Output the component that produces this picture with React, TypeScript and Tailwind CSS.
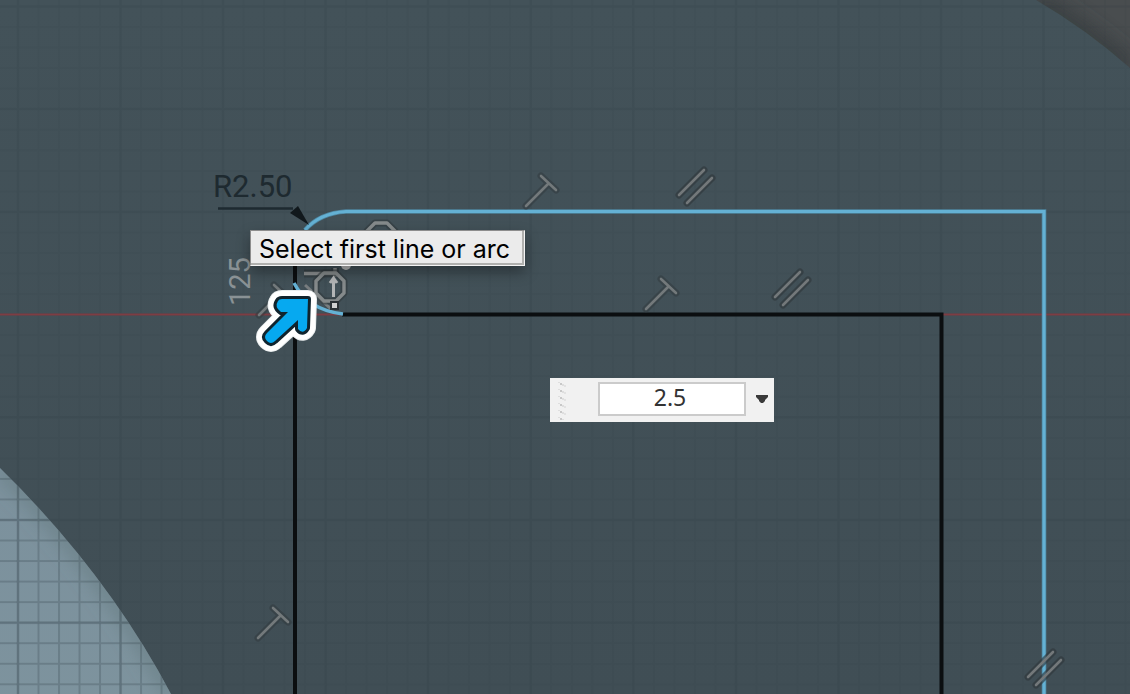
const GRID_X = 20.51;
const GRID_Y = 20.54;

function Perpendicular({ x, y }: { x: number; y: number }) {
  const d = "M0 0L22-22M15-30L30-16";
  return (
    <g transform={`translate(${x} ${y})`} fill="none" strokeLinecap="round">
      <path d={d} stroke="#30383c" strokeOpacity="0.5" strokeWidth="7" />
      <path d={d} stroke="#73797b" strokeWidth="2.6" />
    </g>
  );
}

function Parallel({ x, y }: { x: number; y: number }) {
  const d = "M0 0L25-25M8 8L33-17";
  return (
    <g transform={`translate(${x} ${y})`} fill="none" strokeLinecap="round">
      <path d={d} stroke="#30383c" strokeOpacity="0.65" strokeWidth="7" />
      <path d={d} stroke="#73787a" strokeWidth="2.6" />
    </g>
  );
}

function Octagon({ x, y }: { x: number; y: number }) {
  const d = "M-6-14H6L14-6V6L6 14H-6L-14 6V-6Z";
  return (
    <g transform={`translate(${x} ${y})`} fill="none" strokeLinejoin="round">
      <path d={d} stroke="#30383c" strokeOpacity="0.6" strokeWidth="7" />
      <path d={d} stroke="#858a8b" strokeWidth="3.4" />
    </g>
  );
}

function Cursor() {
  const d =
    "M278 301Q279 299 282 299L308 299L307 328Q303 335 298 329V320L275 341Q271 345 267 341Q263 337 267 333L288 312H281Q274 307 278 301Z";
  return (
    <g strokeLinejoin="round">
      <path d={d} fill="#fff" stroke="#e9edee" strokeWidth="18" />
      <path d={d} fill="#fff" stroke="#fff" strokeWidth="16" />
      <path d={d} fill="#10242e" stroke="#10242e" strokeWidth="6" />
      <path d={d} fill="#06a9f0" />
    </g>
  );
}

function Sketch() {
  return (
    <svg
      className="absolute inset-0 h-full w-full font-['Roboto',sans-serif]"
      role="img"
      aria-label="Sketch canvas"
    >
      <defs>
        <pattern id="minor" x="17" y="5.5" width={GRID_X} height={GRID_Y} patternUnits="userSpaceOnUse">
          <path d={`M0 1H${GRID_X}M1 0V${GRID_Y}`} stroke="#1d2b32" strokeWidth="2" fill="none" />
        </pattern>
        <pattern id="major" x="16.5" y="5" width={GRID_X * 5} height={GRID_Y * 5} patternUnits="userSpaceOnUse">
          <path d={`M0 1.5H${GRID_X * 5}M1.5 0V${GRID_Y * 5}`} stroke="#1d2b32" strokeWidth="3" fill="none" />
        </pattern>
        <linearGradient id="face" x1="0" y1="0" x2="0" y2="1">
          <stop offset="0" stopColor="#435259" />
          <stop offset="1" stopColor="#404e55" />
        </linearGradient>
        <linearGradient id="light" x1="0" y1="0" x2="0" y2="1">
          <stop offset="0" stopColor="#7c919d" />
          <stop offset="1" stopColor="#7f969e" />
        </linearGradient>
        <clipPath id="lower-left">
          <path d="M0 468Q107 573 171 694V2000H0Z" />
        </clipPath>
        <clipPath id="upper-right">
          <path d="M1036 0Q1086 29 1130 68L2000 900V0Z" />
        </clipPath>
        <filter id="edge" x="-20%" y="-20%" width="140%" height="140%">
          <feGaussianBlur stdDeviation="9" />
        </filter>
      </defs>

      <rect width="100%" height="100%" fill="url(#face)" />

      <g clipPath="url(#upper-right)">
        <path d="M1036 0Q1086 29 1130 68L2000 900V0Z" fill="#494d4f" />
        <path d="M1036 0Q1086 29 1130 68" fill="none" stroke="#393e40" strokeWidth="16" filter="url(#edge)" />
      </g>

      <rect width="100%" height="100%" fill="url(#minor)" opacity="0.06" />
      <rect width="100%" height="100%" fill="url(#major)" opacity="0.05" />

      <g clipPath="url(#lower-left)">
        <rect y="460" width="180" height="100%" fill="url(#light)" />
        <path d="M0 468Q107 573 171 694" fill="none" stroke="#667b81" strokeWidth="10" filter="url(#edge)" />
        <rect y="460" width="180" height="100%" fill="url(#minor)" opacity="0.2" />
        <rect y="460" width="180" height="100%" fill="url(#major)" opacity="0.13" />
      </g>

      <path d="M0 314.5H3000" stroke="#7e3d43" strokeWidth="2" />

      <path d="M295 262V3000M342 314.500H941.5V3000" fill="none" stroke="#0b0e10" strokeWidth="4" />
      <path d="M1044 3000V211.5H346Q320 213 305 230" fill="none" stroke="#4f86a0" strokeWidth="4.6" />
      <path d="M1044 3000V211.5H346Q320 213 305 230" fill="none" stroke="#64b1d4" strokeWidth="3" />
      <path d="M294 283Q308 310 343 314" fill="none" stroke="#64b1d4" strokeWidth="3.5" />

      <g fill="#1e2a30">
        <text x="213" y="197" fontSize="31">
          R2.50
        </text>
        <path d="M218 208.5H293" stroke="#1e2a30" strokeWidth="2.5" />
        <path d="M290 213L298 206L309 225Z" fill="#11181c" />
      </g>
      <text transform="translate(250 306) rotate(-90)" fontSize="29" fill="#8a9295">
        125
      </text>

      <Perpendicular x={526} y={206} />
      <Perpendicular x={646} y={309} />
      <Perpendicular x={258} y={638} />
      <Perpendicular x={259} y={315} />
      <Parallel x={679} y={195} />
      <Parallel x={775} y={297} />
      <Parallel x={1028} y={677} />

      <Octagon x={381} y={237} />
      <g fill="none">
        <path d="M304 273.5H335M335 268V277" stroke="#30383c" strokeOpacity="0.6" strokeWidth="8" />
        <path d="M304 273.5H335M335 268V277" stroke="#8b8f90" strokeWidth="3.5" />
        <path d="M305 285L331 309" stroke="#787d7f" strokeWidth="3" />
      </g>
      <Octagon x={330} y={287} />
      <path d="M333.5 297V279M330 283L333.5 278L337 283" fill="none" stroke="#b3b5b6" strokeWidth="3" />
      <rect x="330" y="301" width="9" height="9" fill="#2a3135" />
      <rect x="332" y="303" width="5" height="5" fill="#d0d1d1" />
      <circle cx="346" cy="265" r="5" fill="#b5b7b7" />
      <Cursor />
    </svg>
  );
}

function Grip() {
  return (
    <svg className="h-10 w-3 shrink-0" viewBox="0 0 12 40" aria-hidden="true" shapeRendering="crispEdges">
      <defs>
        <pattern id="grip" width="12" height="7" patternUnits="userSpaceOnUse">
          <rect x="2" y="1" width="2" height="2" fill="#c8c8c8" />
          <rect x="4" y="2" width="2" height="2" fill="#dedede" />
          <rect x="6" y="3" width="2" height="2" fill="#e2e2e2" />
          <rect x="0" y="0" width="2" height="1" fill="#dedede" />
        </pattern>
      </defs>
      <rect width="12" height="38" fill="url(#grip)" />
    </svg>
  );
}

export default function App() {
  return (
    <main className="relative h-screen w-full overflow-hidden bg-[#414f57]">
      <Sketch />
      <div
        role="tooltip"
        className="absolute left-[250px] top-[230px] border border-[#f4f4f4] border-t-[#8d8d8d] border-l-[#8d8d8d] shadow-[0_6px_14px_rgba(0,0,0,0.35)]"
      >
        <div className="border-r-2 border-b-2 border-[#b0b0ae] bg-[#ebebeb] pt-1 pr-3 pl-2 font-['Inter',sans-serif] text-[25px] leading-7 whitespace-nowrap text-black">
          Select first line or arc
        </div>
      </div>
      <form
        className="absolute left-[550px] top-[378px] flex h-11 w-56 items-start bg-[#f1f1f1] pt-1 pl-2"
        onSubmit={(event) => event.preventDefault()}
      >
        <Grip />
        <input
          aria-label="Fillet radius"
          defaultValue="2.5"
          className="ml-7 h-[34px] w-[148px] border-2 border-[#cbcbcb] bg-white pr-1 pb-1 text-center font-['Noto_Sans',sans-serif] text-[23px] text-[#333333] outline-none"
        />
        <button type="button" aria-label="Radius options" className="flex h-[34px] flex-1 items-center justify-center pl-1">
          <svg className="h-3 w-3" viewBox="0 0 12 12" aria-hidden="true">
            <path d="M0 2H12V4L9 7V8L7 10H5L3 8V7L0 4Z" fill="#3a3a3a" />
          </svg>
        </button>
      </form>
    </main>
  );
}
